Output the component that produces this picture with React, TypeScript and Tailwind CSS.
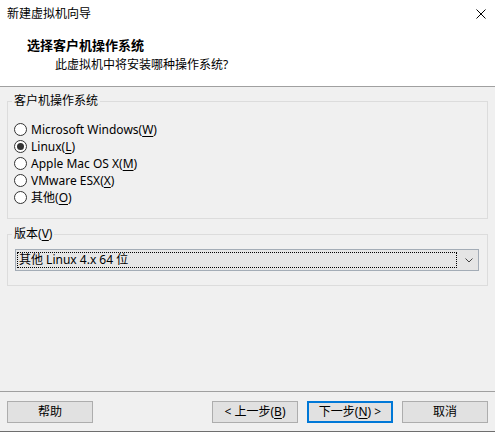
import React, { useState } from 'react';

const font = 'font-["Segoe_UI","Noto_Sans","Noto_Sans_CJK_SC",sans-serif]';

const Key = ({ k }: { k: string }) => (
  <>
    (<span className="underline underline-offset-2">{k}</span>)
  </>
);

const Radio = ({ checked, label, onClick }: { checked: boolean; label: React.ReactNode; onClick: () => void }) => (
  <div className="flex items-center h-[17px] cursor-default" onClick={onClick}>
    <span className="w-[13px] h-[13px] rounded-full border border-[#333333] bg-white flex items-center justify-center">
      {checked && <span className="w-[7px] h-[7px] rounded-full bg-[#333333]" />}
    </span>
    <span className="ml-[4px]">{label}</span>
  </div>
);

const Btn = ({ children, focused }: { children: React.ReactNode; focused?: boolean }) => (
  <button
    className={`w-[86px] h-[22px] bg-[#e1e1e1] flex items-center justify-center ${
      focused ? 'border-2 border-[#0078d7]' : 'border border-[#adadad]'
    }`}
  >
    {children}
  </button>
);

const App = () => {
  const [os, setOs] = useState('linux');

  const options = [
    { id: 'win', label: <>Microsoft Windows<Key k="W" /></> },
    { id: 'linux', label: <>Linux<Key k="L" /></> },
    { id: 'mac', label: <>Apple Mac OS X<Key k="M" /></> },
    { id: 'esx', label: <>VMware ESX<Key k="X" /></> },
    { id: 'other', label: <>其他<Key k="O" /></> },
  ];

  return (
    <div className={`w-[495px] h-[432px] flex flex-col bg-[#f0f0f0] text-[12px] leading-[16px] text-black ${font}`}>
      {/* Title bar + header */}
      <div className="bg-white h-[87px] border-b border-[#a0a0a0] shrink-0">
        <div className="flex items-center justify-between h-[28px] pl-[7px] pr-[9px]">
          <span>新建虚拟机向导</span>
          <svg width="10" height="10" viewBox="0 0 10 10">
            <path d="M0.5 0.5 L9.5 9.5 M9.5 0.5 L0.5 9.5" stroke="#000" strokeWidth="1" />
          </svg>
        </div>
        <div className="pl-[27px] pt-[9px] font-bold text-[13px] leading-[17px]">选择客户机操作系统</div>
        <div className="pl-[55px] pt-[3px]">此虚拟机中将安装哪种操作系统?</div>
      </div>

      {/* Guest OS group */}
      <fieldset className="mx-[7px] mt-[6px] border border-[#dcdcdc] px-[6px] pt-[12px] pb-[12px]">
        <legend className="-ml-[2px] px-[2px]">客户机操作系统</legend>
        {options.map((o) => (
          <Radio key={o.id} checked={os === o.id} label={o.label} onClick={() => setOs(o.id)} />
        ))}
      </fieldset>

      {/* Version group */}
      <fieldset className="mx-[7px] mt-[7px] border border-[#dcdcdc] pl-[7px] pr-[8px] pt-[7px] pb-[14px]">
        <legend className="-ml-[3px] px-[2px]">
          版本<Key k="V" />
        </legend>
        <div className="h-[22px] bg-[#e5e5e5] border border-[#a3acb6] flex items-center pl-[1px] pr-[3px]">
          <div className="flex-1 h-[16px] border border-dotted border-black flex items-center pl-[1px]">
            其他 Linux 4.x 64 位
          </div>
          <svg width="12" height="12" viewBox="0 0 12 12" className="ml-[6px]">
            <path d="M2.5 4.5 L6 8 L9.5 4.5" fill="none" stroke="#444" strokeWidth="1" />
          </svg>
        </div>
      </fieldset>

      <div className="flex-1" />

      {/* Buttons */}
      <div className="border-t border-[#a0a0a0] border-b border-b-[#6e6e6e] pt-[9px] pb-[8px] px-[7px] flex items-center">
        <Btn>帮助</Btn>
        <div className="flex-1" />
        <div className="flex gap-[9px]">
          <Btn>&lt; 上一步<Key k="B" /></Btn>
          <Btn focused>下一步<Key k="N" /> &gt;</Btn>
          <Btn>取消</Btn>
        </div>
      </div>
    </div>
  );
};

export default App;
